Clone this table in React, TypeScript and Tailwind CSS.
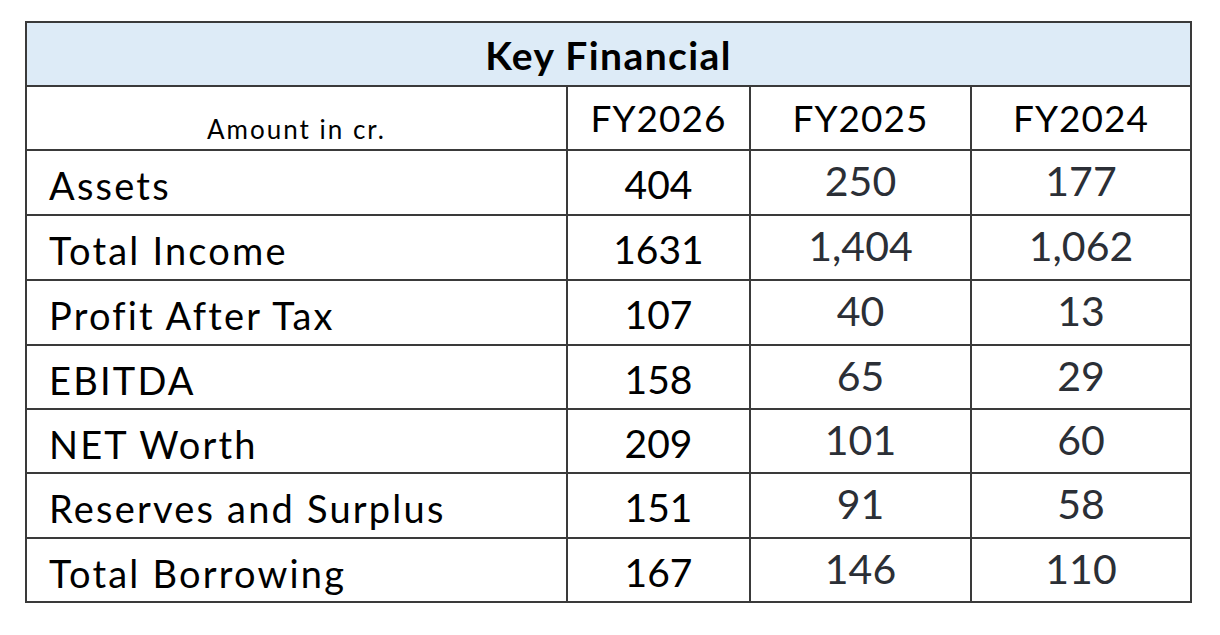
const rows: [string, string, string, string][] = [
  ["Assets", "404", "250", "177"],
  ["Total Income", "1631", "1,404", "1,062"],
  ["Profit After Tax", "107", "40", "13"],
  ["EBITDA", "158", "65", "29"],
  ["NET Worth", "209", "101", "60"],
  ["Reserves and Surplus", "151", "91", "58"],
  ["Total Borrowing", "167", "146", "110"],
];

export default function App() {
  return (
    <div className="min-h-screen bg-white pt-[21px] pl-[25px] font-['Lato',sans-serif]">
      <div className="grid w-[1167px] grid-cols-[539px_181px_219px_218px] grid-rows-[62px_62px_63px_63px_63px_62px_62px_63px_62px] gap-[2px] bg-[#3a3a3a] p-[2px]">
        <div className="col-span-4 bg-[#ddebf7] pt-[13px] text-center text-[39px] font-bold leading-none tracking-[1.4px] text-black">
          Key Financial
        </div>

        <div className="bg-white pt-[29px] text-center text-[26px] leading-none tracking-[2px] text-black">
          Amount in cr.
        </div>
        {["FY2026", "FY2025", "FY2024"].map((y) => (
          <div key={y} className="bg-white pt-[12px] text-center text-[37px] leading-none tracking-[1px] text-black">
            {y}
          </div>
        ))}

        {rows.map(([label, a, b, c]) => (
          <div key={label} className="contents">
            <div className="bg-white pl-[22px] pt-[15px] text-[38px] leading-none tracking-[2.2px] text-black">
              {label}
            </div>
            <div className="bg-white pt-[14px] text-center text-[39px] leading-none text-black">
              {a}
            </div>
            <div className="bg-white pt-[9px] text-center text-[41px] leading-none text-[#2b2f36]">
              {b}
            </div>
            <div className="bg-white pt-[9px] text-center text-[41px] leading-none text-[#2b2f36]">
              {c}
            </div>
          </div>
        ))}
      </div>
    </div>
  );
}
